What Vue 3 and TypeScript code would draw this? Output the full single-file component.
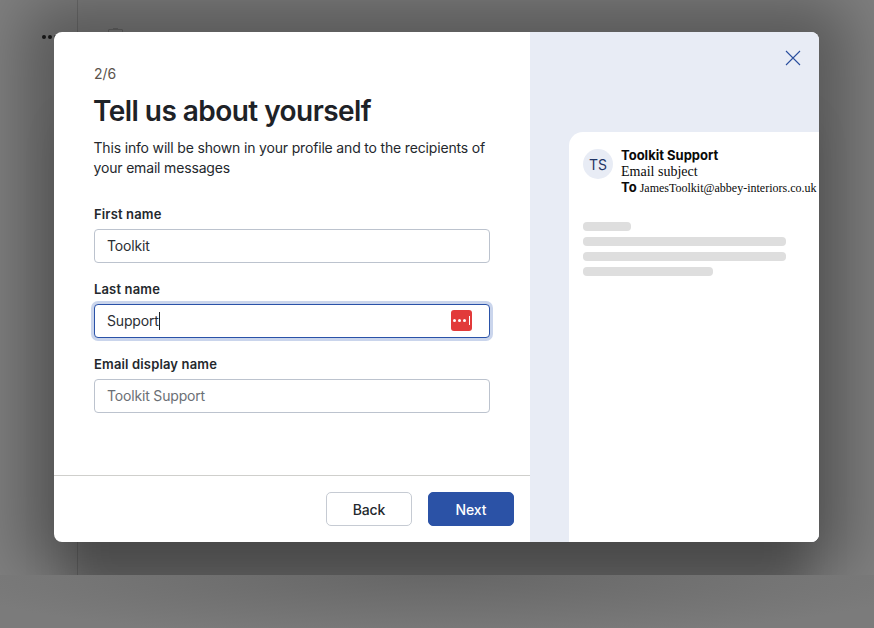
<script setup lang="ts">
interface Field {
  label: string;
  value: string;
  focused?: boolean;
  muted?: boolean;
}

const fields: Field[] = [
  { label: "First name", value: "Toolkit" },
  { label: "Last name", value: "Support", focused: true },
  { label: "Email display name", value: "Toolkit Support", muted: true },
];

const skeleton = [48, 203, 203, 130];
</script>

<template>
  <div class="page">
    <div class="backdrop-top">
      <div class="sidebar">
        <span class="dots"><i></i><i></i><i></i></span>
      </div>
      <div class="main">
        <span class="ghost-icon"></span>
      </div>
    </div>
    <div class="backdrop-bottom"></div>

    <div class="modal">
      <div class="left">
        <div class="form">
          <div class="step">2/6</div>
          <h1>Tell us about yourself</h1>
          <p class="intro">
            This info will be shown in your profile and to the recipients of
            your email messages
          </p>
          <div v-for="f in fields" :key="f.label" class="field">
            <label>{{ f.label }}</label>
            <div class="input" :class="{ focused: f.focused, muted: f.muted }">
              <span>{{ f.value }}</span>
              <span v-if="f.focused" class="caret"></span>
              <span v-if="f.focused" class="lastpass">
                <i></i><i></i><i></i><b></b>
              </span>
            </div>
          </div>
        </div>
        <div class="footer">
          <button class="btn btn-back">Back</button>
          <button class="btn btn-next">Next</button>
        </div>
      </div>

      <div class="right">
        <button class="close" title="Close">
          <svg width="16" height="16" viewBox="0 0 16 16" aria-hidden="true">
            <path
              d="M1 1l14 14M15 1L1 15"
              stroke="#2b4f9e"
              stroke-width="1.1"
              fill="none"
            />
          </svg>
        </button>
        <div class="preview">
          <div class="head">
            <div class="avatar">TS</div>
            <div class="meta">
              <div class="sender">Toolkit Support</div>
              <div class="subject">Email subject</div>
              <div class="to">
                <strong>To</strong> JamesToolkit@abbey-interiors.co.uk
              </div>
            </div>
          </div>
          <div class="lines">
            <div
              v-for="(w, i) in skeleton"
              :key="i"
              class="line"
              :style="{ width: w + 'px' }"
            ></div>
          </div>
        </div>
      </div>
    </div>
  </div>
</template>

<style>
html,
body {
  margin: 0;
  padding: 0;
}
</style>

<style scoped>
.page {
  position: relative;
  width: 874px;
  height: 628px;
  overflow: hidden;
  display: flex;
  flex-direction: column;
  background: #7f7f7f;
  font-family: Inter, "Liberation Sans", sans-serif;
}
.backdrop-top {
  height: 575px;
  display: flex;
  flex-shrink: 0;
}
.sidebar {
  width: 77px;
  border-right: 1px solid rgba(0, 0, 0, 0.14);
  position: relative;
}
.dots {
  position: absolute;
  left: 42px;
  top: 35px;
  display: flex;
  gap: 2px;
}
.dots i {
  width: 4px;
  height: 4px;
  border-radius: 50%;
  background: #1c1c1c;
}
.main {
  flex: 1;
  position: relative;
}
.ghost-icon {
  position: absolute;
  left: 30px;
  top: 29px;
  width: 13px;
  height: 12px;
  border: 1px solid rgba(0, 0, 0, 0.18);
  border-radius: 1px;
}
.ghost-icon::before {
  content: "";
  position: absolute;
  left: 4px;
  top: -2px;
  width: 5px;
  height: 1px;
  background: rgba(0, 0, 0, 0.18);
}
.backdrop-bottom {
  flex: 1;
  position: relative;
  z-index: 2;
  background: radial-gradient(
    ellipse 500px 64px at 437px 0,
    #666666 0%,
    #7b7b7b 100%
  );
}
.modal {
  position: absolute;
  z-index: 1;
  left: 54px;
  top: 32px;
  width: 765px;
  height: 510px;
  display: flex;
  border-radius: 8px;
  overflow: hidden;
  background: #fff;
  box-shadow:
    0 0 60px 30px rgba(0, 0, 0, 0.3),
    0 80px 40px -15px rgba(0, 0, 0, 0.22);
}
.left {
  width: 476px;
  display: flex;
  flex-direction: column;
  flex-shrink: 0;
}
.form {
  flex: 1;
  padding: 33px 40px 0;
}
.step {
  font-size: 14px;
  line-height: 17px;
  color: #5b534c;
  letter-spacing: -0.1px;
}
h1 {
  margin: 11px 0 0 -1px;
  font-size: 28px;
  line-height: 36px;
  font-weight: 600;
  letter-spacing: -0.55px;
  color: #1e2227;
}
.intro {
  margin: 9px 0 28px -0.5px;
  font-size: 14px;
  line-height: 20px;
  letter-spacing: -0.17px;
  color: #24282d;
}
.field {
  margin-bottom: 18px;
}
label {
  display: block;
  margin-bottom: 7px;
  font-size: 13px;
  line-height: 16px;
  font-weight: 600;
  letter-spacing: 0.15px;
  color: #24282d;
}
.input {
  box-sizing: border-box;
  height: 34px;
  padding: 0 12px 1px;
  display: flex;
  align-items: center;
  border: 1px solid #bcc3ce;
  border-radius: 4px;
  font-size: 14px;
  letter-spacing: -0.17px;
  color: #2a2e33;
  background: #fff;
}
.input.muted {
  color: #6b6f75;
}
.input.focused {
  border-color: #2a52a8;
  box-shadow: 0 0 0 3px #cad5ec;
}
.caret {
  width: 1px;
  height: 18px;
  background: #1e2227;
}
.lastpass {
  margin-left: auto;
  margin-right: 5px;
  width: 21px;
  height: 21px;
  border-radius: 3px;
  background: #e23a3a;
  display: flex;
  align-items: center;
  justify-content: center;
  gap: 2px;
}
.lastpass i {
  width: 3px;
  height: 3px;
  border-radius: 50%;
  background: #fff;
}
.lastpass b {
  width: 1px;
  height: 9px;
  background: #fff;
  margin-left: 1px;
}
.footer {
  box-sizing: border-box;
  height: 67px;
  flex-shrink: 0;
  border-top: 1px solid #cfcfcc;
  display: flex;
  justify-content: flex-end;
  align-items: flex-start;
  gap: 16px;
  padding: 16px 16px 0 0;
}
.btn {
  box-sizing: border-box;
  width: 86px;
  height: 34px;
  border-radius: 5px;
  font-family: inherit;
  font-size: 14px;
  font-weight: 500;
  letter-spacing: -0.1px;
  cursor: pointer;
}
.btn-back {
  background: #fff;
  border: 1px solid #c6cbd3;
  color: #24282d;
}
.btn-next {
  background: #2b52a6;
  border: 1px solid #2b52a6;
  color: #fff;
}
.right {
  box-sizing: border-box;
  width: 289px;
  flex-shrink: 0;
  position: relative;
  background: #e8ecf5;
  padding: 100px 0 0 39px;
}
.close {
  position: absolute;
  top: 18px;
  right: 18px;
  width: 16px;
  height: 16px;
  padding: 0;
  border: none;
  background: none;
  cursor: pointer;
  display: flex;
}
.preview {
  box-sizing: border-box;
  height: 410px;
  padding: 14px 0 0 14px;
  background: #fff;
  border-radius: 14px 0 0 0;
}
.head {
  display: flex;
  gap: 8px;
}
.avatar {
  width: 30px;
  height: 30px;
  margin-top: 3px;
  border-radius: 50%;
  background: #e8ecf5;
  color: #1f3566;
  font-size: 14px;
  display: flex;
  align-items: center;
  justify-content: center;
  flex-shrink: 0;
}
.meta {
  white-space: nowrap;
  color: #0a0a0a;
}
.sender {
  font-size: 13px;
  line-height: 18px;
  font-weight: 700;
}
.subject {
  font-family: "Liberation Serif", serif;
  font-size: 14px;
  line-height: 16px;
}
.to {
  font-family: "Liberation Serif", serif;
  font-size: 12px;
  line-height: 15px;
}
.to strong {
  font-family: Inter, "Liberation Sans", sans-serif;
  font-size: 13px;
  font-weight: 700;
}
.lines {
  margin-top: 26px;
  display: flex;
  flex-direction: column;
  gap: 6px;
}
.line {
  height: 9px;
  border-radius: 4px;
  background: #dedede;
}
</style>
